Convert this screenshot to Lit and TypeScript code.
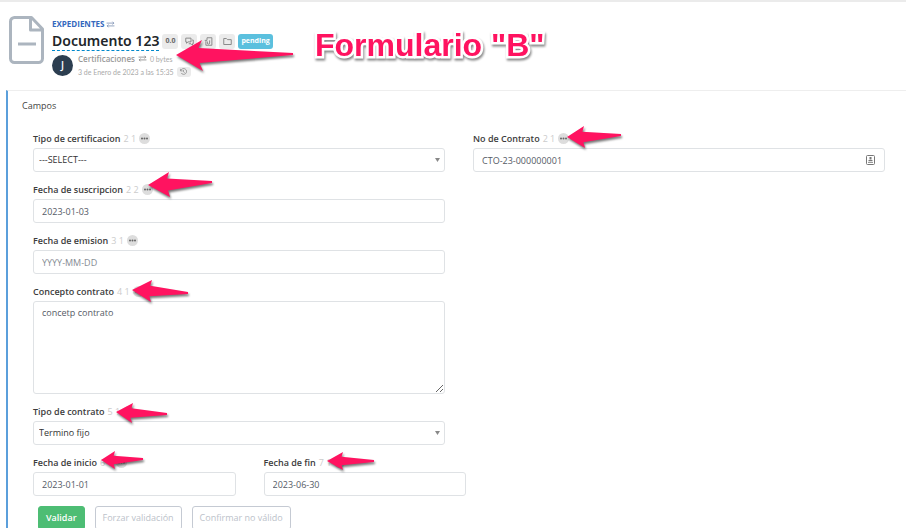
import { LitElement, html, svg, css } from "lit";
import { customElement } from "lit/decorators.js";

type Point = [number, number];

/** An annotation arrow: its point, the end of its tail, and its two barbs. */
interface Arrow {
  tip: Point;
  tail: Point;
  upper: Point;
  lower: Point;
}

const ARROWS: Arrow[] = [
  { tip: [176, 55], tail: [293, 54], upper: [202, 40], lower: [203, 71] },
  { tip: [148, 185], tail: [212, 182], upper: [169, 172], lower: [170, 197] },
  { tip: [567, 137], tail: [621, 135], upper: [584, 126], lower: [585, 148] },
  { tip: [132, 290], tail: [188, 293], upper: [152, 280], lower: [151, 302] },
  { tip: [116, 412], tail: [167, 414], upper: [133, 403], lower: [132, 423] },
  { tip: [101, 460], tail: [143, 459], upper: [115, 451], lower: [115, 469] },
  { tip: [327, 461], tail: [374, 461], upper: [343, 452], lower: [343, 470] },
];

function arrowPoints({ tip, tail, upper, lower }: Arrow): string {
  const inset = (tail[0] - tip[0]) * 0.03;
  const mid = (upper[1] + lower[1]) / 2;
  const notch = (barb: Point): Point => [barb[0] - inset, mid + (barb[1] - mid) * 0.48];
  return [tip, upper, notch(upper), [tail[0], tail[1] - 1], [tail[0], tail[1] + 1], notch(lower), lower]
    .map((p) => p.join(","))
    .join(" ");
}

const swapIcon = html`<svg class="swap" viewBox="0 0 16 12" aria-hidden="true">
  <path d="M1 3.5h13M11.5 1 14 3.5 11.5 6M15 8.5H2M4.500 6 2 8.500 4.500 11" />
</svg>`;

@customElement("app-root")
export class AppRoot extends LitElement {
  static styles = css`
    :host {
      display: block;
      position: relative;
      box-sizing: border-box;
      height: 100vh;
      overflow: hidden;
      background: #fff;
      border-top: 2px solid #ebebeb;
      color: #444;
      font: 9px/12px "Open Sans", "Noto Sans", sans-serif;
    }
    *, *::before, *::after { box-sizing: border-box; }
    svg { display: block; fill: none; stroke: currentColor; }
    button, input, select, textarea { font: inherit; color: inherit; margin: 0; }

    .header { display: flex; gap: 8px; height: 88px; padding: 14px 9px 0; }
    .file { width: 35px; height: 48px; color: #acb5bf; stroke-width: 3; stroke-linejoin: round; flex: none; }
    .heading { padding-top: 2px; }
    .swap { width: 9px; height: 7px; stroke-width: 1.5; flex: none; }
    .crumb { display: flex; align-items: center; gap: 2px; height: 12px; font-size: 8px; font-weight: 700; color: #3468bd; text-decoration: none; }
    .crumb .swap { color: #8194b5; }
    .title-row { display: flex; align-items: center; gap: 3px; height: 22px; }
    h1 { margin: 0; height: 19px; border-bottom: 1px dashed #0088cc; color: #212529; font-family: "Noto Sans", sans-serif; font-size: 14px; line-height: 17px; font-weight: 600; }
    .badge { display: flex; align-items: center; justify-content: center; height: 15px; min-width: 16px; padding: 0 3px; border: 0; border-radius: 3px; background: #ebebeb; color: #666; font-size: 7px; font-weight: 700; }
    .badge svg { width: 9px; height: 9px; stroke-width: 1.3; color: #888; }
    .badge.pending { background: #5bc0de; color: #fff; }
    .owner { display: flex; gap: 5px; margin-top: 3px; }
    .avatar { width: 21px; height: 21px; border-radius: 50%; background: #2c3e50; color: #fff; text-align: center; font-size: 10px; line-height: 21px; font-weight: 600; }
    .meta { margin-top: -3px; color: #aaa; font-family: Lato, sans-serif; font-size: 7px; }
    .meta div { display: flex; align-items: center; gap: 3px; height: 13px; }
    .meta b { color: #999; font-family: "Open Sans", sans-serif; font-size: 8px; font-weight: 600; }
    .meta .swap { color: #888; }
    .meta .badge { height: 10px; min-width: 14px; padding: 0 3px; }
    .meta .badge svg { width: 7px; height: 7px; }

    .panel { margin-left: 6px; border-left: 2px solid #5b9fdb; border-top: 1px solid #eee; padding: 8px 21px 0 25px; }
    h2 { margin: 0 0 16px -11px; font-size: 9px; line-height: 14px; font-weight: 400; }
    .columns { display: grid; grid-template-columns: 1fr 1fr; gap: 28px; }
    .stack { display: flex; flex-direction: column; gap: 8px; }
    .dates { display: grid; grid-template-columns: 1fr 1fr; gap: 28px; width: calc(50% + 7px); margin-top: 8px; }
    .field { min-width: 0; }
    .label { display: flex; align-items: center; gap: 3px; height: 19px; }
    label { color: #3c3c3c; font-weight: 600; }
    .order { color: #ccc; }
    .more { display: flex; align-items: center; justify-content: center; width: 11px; height: 11px; padding: 0; border: 0; border-radius: 50%; background: #ddd; }
    .more svg { width: 7px; height: 3px; fill: #666; stroke: none; }
    .control { display: block; width: 100%; height: 24px; padding: 0 8px; border: 1px solid #dfe2e5; border-radius: 3px; background: #fff; color: #555b66; outline: 0; }
    .control::placeholder { color: #868c94; opacity: 1; }
    select.control { appearance: none; padding: 0 5px; color: #333; }
    textarea.control { height: 93px; padding: 5px 8px; resize: vertical; }
    .wrap { position: relative; }
    .caret { position: absolute; right: 5px; top: 10px; width: 5px; height: 4px; fill: #888; stroke: none; pointer-events: none; }
    .contact { position: absolute; right: 10px; top: 7px; width: 9px; height: 10px; color: #777; }
    .contact .solid { fill: currentColor; stroke: none; }

    .actions { display: flex; gap: 10px; margin: 10px 0 0 5px; }
    .action { height: 24px; padding: 0 7px; border: 1px solid #c5cad3; border-radius: 3px; background: #fff; color: #bcc2ca; white-space: nowrap; }
    .action.primary { border-color: #4dbd74; background: #4dbd74; color: #fff; font-weight: 600; }

    .arrows { position: absolute; left: 0; top: -2px; width: 906px; height: 528px; pointer-events: none; fill: #ff1360; stroke: none; filter: drop-shadow(1px 2px 1px #0008); }
    .note { position: absolute; left: 315px; top: 25px; color: #ff1360; font: bold 32px/36px "Liberation Sans", sans-serif; white-space: nowrap; -webkit-text-stroke: 5px #fff; stroke-linejoin: round; paint-order: stroke fill; filter: drop-shadow(1px 2px 1px #0007); }
  `;

  private label(id: string, text: string, order: string) {
    return html`<div class="label">
      <label for=${id}>${text}</label><span class="order">${order}</span>
      <button class="more" type="button" aria-label="Opciones de ${text}">
        <svg viewBox="0 0 7 3"><circle cx="1" cy="1.5" r="1" /><circle cx="3.5" cy="1.5" r="1" /><circle cx="6" cy="1.5" r="1" /></svg>
      </button>
    </div>`;
  }

  private input(id: string, text: string, order: string, value: string, placeholder = "") {
    return html`<div class="field">
      ${this.label(id, text, order)}
      <input class="control" id=${id} type="text" .value=${value} placeholder=${placeholder} />
    </div>`;
  }

  private select(id: string, text: string, order: string, option: string) {
    return html`<div class="field">
      ${this.label(id, text, order)}
      <div class="wrap">
        <select class="control" id=${id}><option>${option}</option></select>
        <svg class="caret" viewBox="0 0 5 4"><path d="M0 0h5L2.500 4z" /></svg>
      </div>
    </div>`;
  }

  render() {
    return html`
      <header class="header">
        <svg class="file" viewBox="0 0 35 48" aria-hidden="true">
          <path d="M5 1.500h17.500L33.500 13v29.500a4 4 0 0 1-4 4H5.500a4 4 0 0 1-4-4V5.500a4 4 0 0 1 4-4zM21.500 2v12h12M9 28h18" />
        </svg>
        <div class="heading">
          <a class="crumb" href="#expedientes">EXPEDIENTES ${swapIcon}</a>
          <div class="title-row">
            <h1>Documento 123</h1>
            <span class="badge">0.0</span>
            <button class="badge" type="button" aria-label="Comentarios">
              <svg viewBox="0 0 12 12"><path d="M8 6.500H4L2 8.300V6.500H1V1.500h7zM9.500 4H11v5h-1v2L8 9H5" /></svg>
            </button>
            <button class="badge" type="button" aria-label="Adjuntos">
              <svg viewBox="0 0 12 12"><path d="M4 1h6.500v10h-8V5.500M4 1v3.500H1M7.500 4.500V8a1.500 1.500 0 0 1-3 0V6" /></svg>
            </button>
            <button class="badge" type="button" aria-label="Carpeta">
              <svg viewBox="0 0 12 12"><path d="M1 2h3.500L6 3.500h5V10H1z" /></svg>
            </button>
            <span class="badge pending">pending</span>
          </div>
          <div class="owner">
            <span class="avatar">J</span>
            <div class="meta">
              <div><b>Certificaciones</b>${swapIcon}<span>0 bytes</span></div>
              <div>
                <span>3 de Enero de 2023 a las 15:35</span>
                <button class="badge" type="button" aria-label="Historial">
                  <svg viewBox="0 0 12 12"><path d="M1 1.500V5h3.500M1.500 4.500a5 5 0 1 1 .5 4M6 3.500V6.500L8 8" /></svg>
                </button>
              </div>
            </div>
          </div>
        </div>
      </header>

      <main class="panel">
        <h2>Campos</h2>
        <form>
          <div class="columns">
            <div class="stack">
              ${this.select("certificacion", "Tipo de certificacion", "2 1", "---SELECT---")}
              ${this.input("suscripcion", "Fecha de suscripcion", "2 2", "2023-01-03")}
              ${this.input("emision", "Fecha de emision", "3 1", "", "YYYY-MM-DD")}
              <div class="field">
                ${this.label("concepto", "Concepto contrato", "4 1")}
                <textarea class="control" id="concepto" .value=${"concetp contrato"}></textarea>
              </div>
              ${this.select("contrato", "Tipo de contrato", "5 1", "Termino fijo")}
            </div>
            <div class="field">
              ${this.label("numero", "No de Contrato", "2 1")}
              <div class="wrap">
                <input class="control" id="numero" type="text" .value=${"CTO-23-000000001"} />
                <svg class="contact" viewBox="0 0 9 10" aria-hidden="true">
                  <rect x="0.5" y="0.5" width="8" height="9" rx="1" />
                  <path class="solid" d="M3.500 2h2v2.500h-2zM2.500 5h4v1.200h-4zM2 7.300h5v.8H2z" />
                </svg>
              </div>
            </div>
          </div>
          <div class="dates">
            ${this.input("inicio", "Fecha de inicio", "6 1", "2023-01-01")}
            ${this.input("fin", "Fecha de fin", "7 1", "2023-06-30")}
          </div>
          <div class="actions">
            <button class="action primary" type="button">Validar</button>
            <button class="action" type="button">Forzar validación</button>
            <button class="action" type="button">Confirmar no válido</button>
          </div>
        </form>
      </main>

      <svg class="arrows" viewBox="0 0 906 528" aria-hidden="true">
        ${ARROWS.map((a) => svg`<polygon points=${arrowPoints(a)} />`)}
      </svg>
      <div class="note">Formulario "B"</div>
    `;
  }
}
